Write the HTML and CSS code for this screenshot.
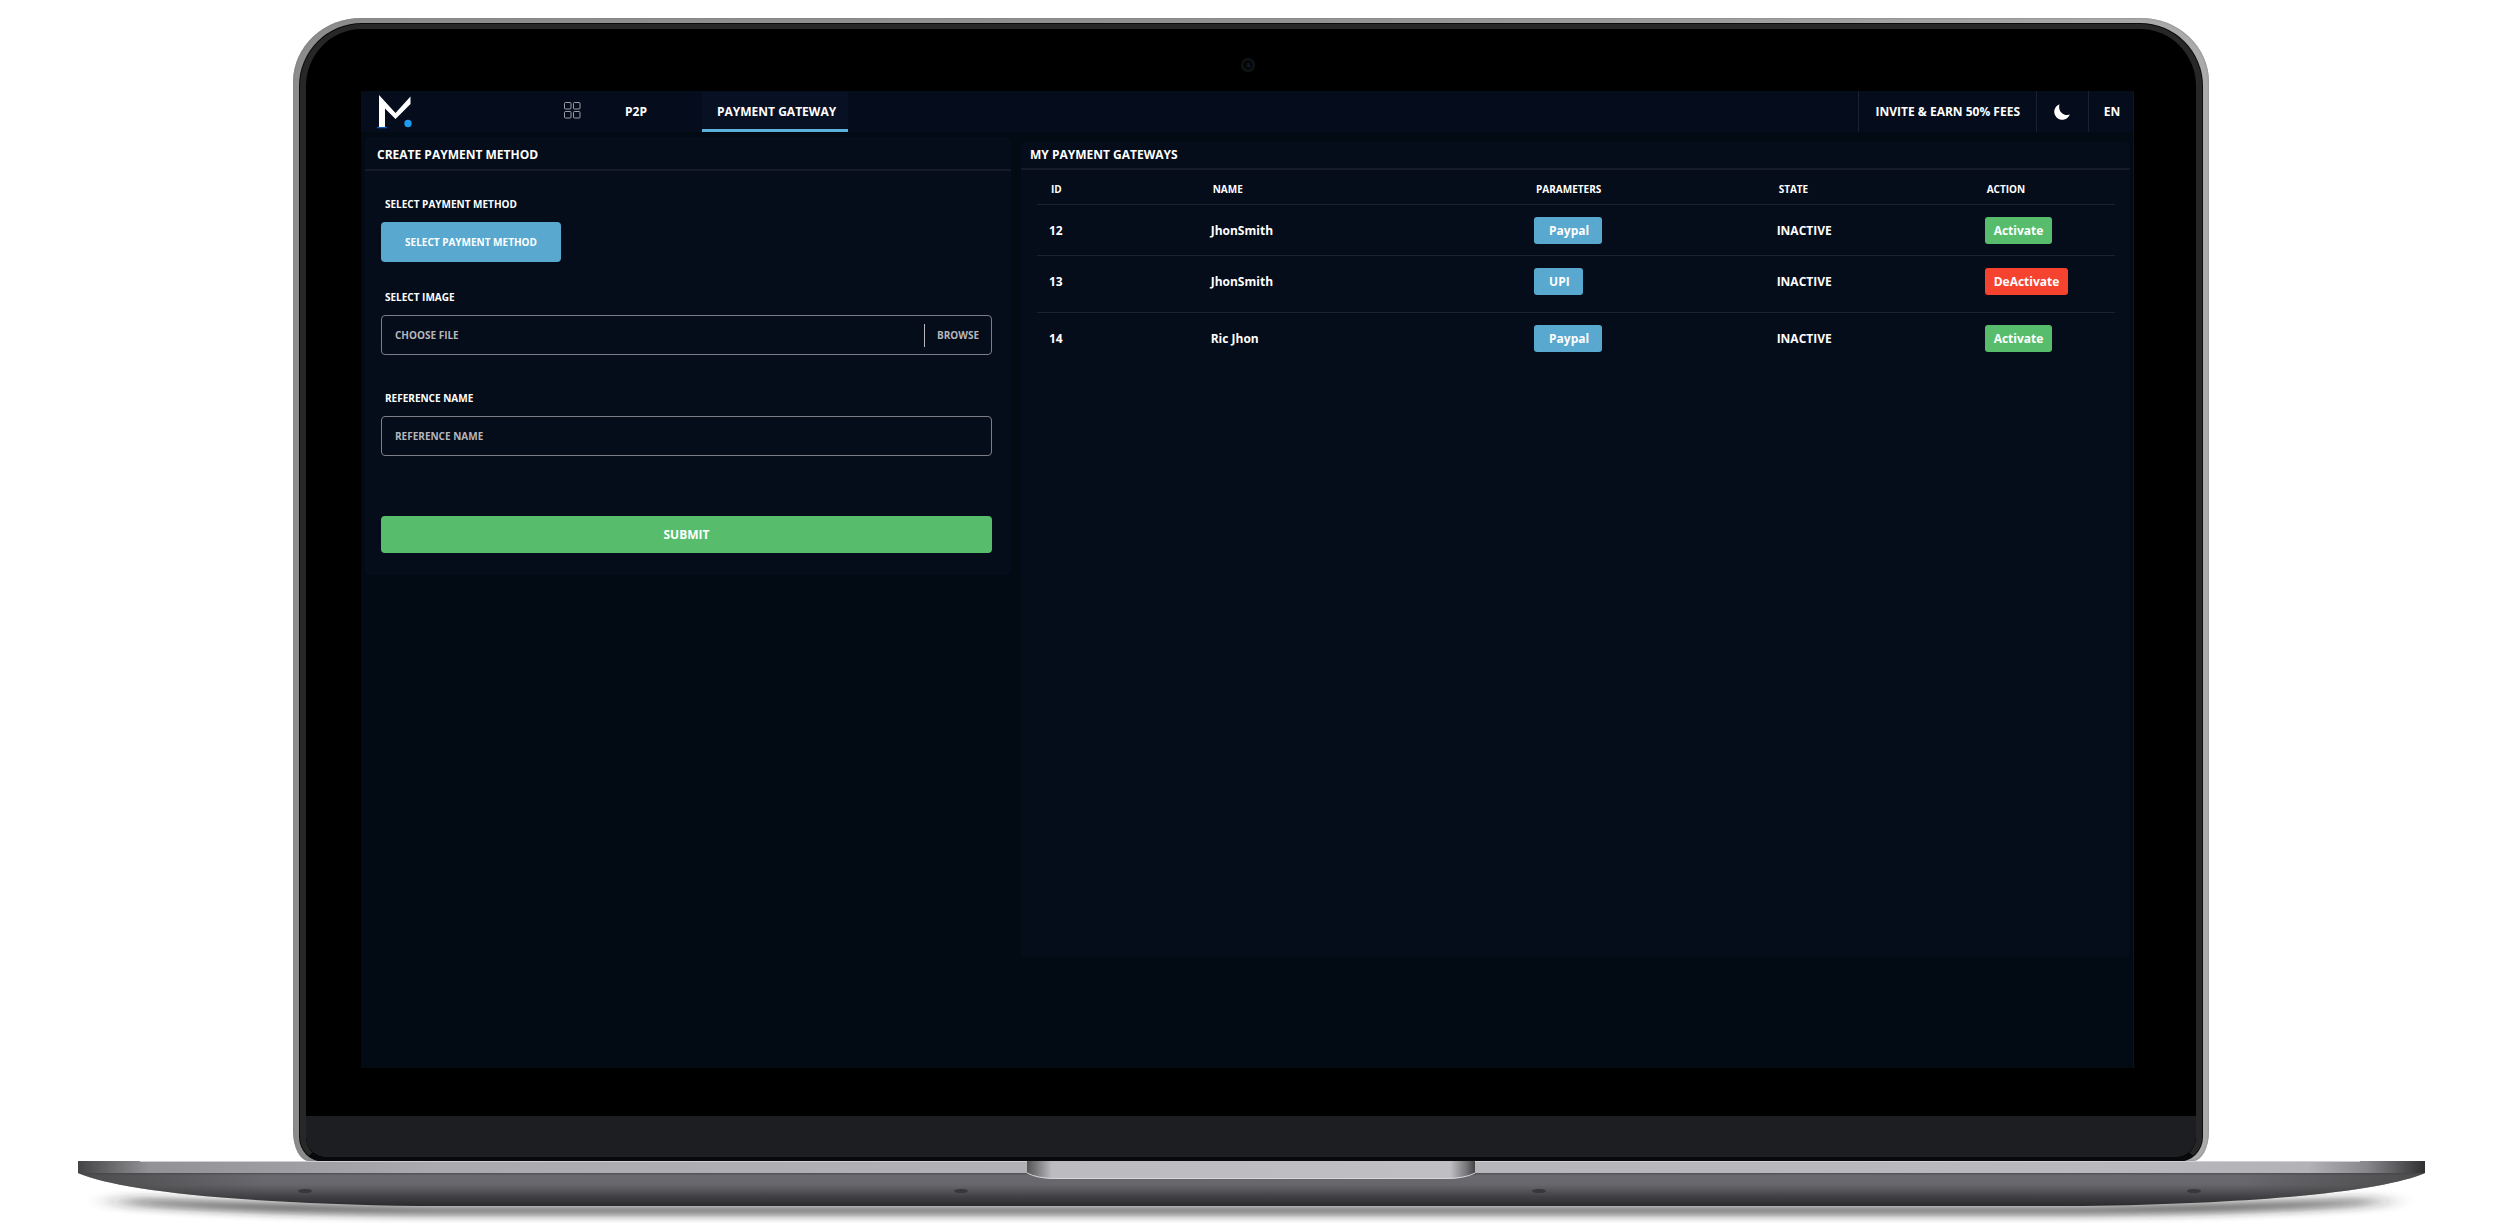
FILE: index.html
```html
<!DOCTYPE html>
<html lang="en">
<head>
<meta charset="utf-8">
<meta name="viewport" content="width=device-width, initial-scale=1">
<title>Payment Gateway</title>
<link rel="stylesheet" href="styles.css">
</head>
<body>
<div class="laptop">
  <div class="lid">
    <div class="bezel">
      <div class="camera-bar">
        <svg class="camera" viewBox="0 0 16 16" aria-hidden="true">
          <circle cx="8" cy="8" r="6" fill="#050708" stroke="#121516" stroke-width="2"/>
          <path d="M8 5l3 5H7z" fill="#101a2c"/>
        </svg>
      </div>
      <div class="screen">
        <header class="topbar">
          <a class="logo" href="#" aria-label="Home">
            <svg viewBox="0 0 36 34" aria-hidden="true">
              <path d="M0 32.500h10" stroke="#1257b5" stroke-width="1.500"/>
              <path d="M2 0L18.500 18 33.500 1.500V9L18.500 24 8 13.500V32H2z" fill="#fff"/>
              <circle cx="31" cy="28.500" r="3.700" fill="#1d9bf0"/>
            </svg>
          </a>
          <nav class="nav">
            <a class="nav-apps" href="#" aria-label="Apps">
              <svg viewBox="0 0 17 17" fill="none" stroke="#9b9ea4" aria-hidden="true">
                <rect x=".5" y=".5" width="6.500" height="6.500" rx="1"/>
                <rect x="9.500" y=".5" width="6.500" height="6.500" rx="1"/>
                <rect x=".5" y="9.500" width="6.500" height="6.500" rx="1"/>
                <rect x="9.500" y="9.500" width="6.500" height="6.500" rx="1"/>
              </svg>
            </a>
            <a class="nav-link" href="#">P2P</a>
            <a class="nav-link nav-link-active" href="#" aria-current="page">PAYMENT GATEWAY</a>
          </nav>
          <div class="tools">
            <a class="tool tool-invite" href="#">INVITE &amp; EARN 50% FEES</a>
            <button class="tool tool-theme" type="button" aria-label="Dark mode">
              <svg viewBox="0 0 16 16" aria-hidden="true"><path d="M5.500.3A8 8 0 1 0 15.800 10.500C10 12.500 3.500 7.500 5.500.3z" fill="#fff"/></svg>
            </button>
            <button class="tool tool-lang" type="button">EN</button>
          </div>
        </header>
        <main class="panels">
          <section class="panel panel-create">
            <h2 class="panel-title">CREATE PAYMENT METHOD</h2>
            <form class="form">
              <div class="field">
                <label class="label" for="method">SELECT PAYMENT METHOD</label>
                <button class="btn btn-method" id="method" type="button">SELECT PAYMENT METHOD</button>
              </div>
              <div class="field">
                <label class="label" for="image">SELECT IMAGE</label>
                <div class="control file">
                  <input class="file-name" id="image" type="text" placeholder="CHOOSE FILE" readonly>
                  <button class="file-browse" type="button">BROWSE</button>
                </div>
              </div>
              <div class="field">
                <label class="label" for="reference">REFERENCE NAME</label>
                <input class="control text" id="reference" type="text" placeholder="REFERENCE NAME">
              </div>
              <button class="btn btn-submit" type="submit">SUBMIT</button>
            </form>
          </section>
          <section class="panel panel-list">
            <h2 class="panel-title">MY PAYMENT GATEWAYS</h2>
            <table class="gateways">
              <colgroup><col class="col-id"><col class="col-name"><col class="col-parameters"><col class="col-state"><col class="col-action"></colgroup>
              <thead>
                <tr><th>ID</th><th>NAME</th><th>PARAMETERS</th><th>STATE</th><th>ACTION</th></tr>
              </thead>
              <tbody>
                <tr><td>12</td><td>JhonSmith</td><td><button class="tag" type="button">Paypal</button></td><td>INACTIVE</td><td><button class="action action-on" type="button">Activate</button></td></tr>
                <tr class="row-tall"><td>13</td><td>JhonSmith</td><td><button class="tag" type="button">UPI</button></td><td>INACTIVE</td><td><button class="action action-off" type="button">DeActivate</button></td></tr>
                <tr><td>14</td><td>Ric Jhon</td><td><button class="tag" type="button">Paypal</button></td><td>INACTIVE</td><td><button class="action action-on" type="button">Activate</button></td></tr>
              </tbody>
            </table>
          </section>
        </main>
      </div>
      <div class="chin"></div>
    </div>
  </div>
  <svg class="base" viewBox="0 0 2500 71" aria-hidden="true">
    <defs>
      <linearGradient id="edge" x1="78" x2="2425" y1="0" y2="0" gradientUnits="userSpaceOnUse">
        <stop offset="0" stop-color="#444447"/><stop offset=".012" stop-color="#636366"/><stop offset=".03" stop-color="#929195"/><stop offset=".15" stop-color="#aaa9ae"/>
        <stop offset=".5" stop-color="#b5b4b9"/><stop offset=".85" stop-color="#b9b8bd"/><stop offset=".95" stop-color="#b3b2b7"/><stop offset=".975" stop-color="#88878b"/><stop offset="1" stop-color="#303033"/>
      </linearGradient>
      <linearGradient id="under" x1="0" x2="0" y1="12" y2="46" gradientUnits="userSpaceOnUse">
        <stop offset="0" stop-color="#504f54"/><stop offset=".08" stop-color="#6b6a70"/><stop offset=".35" stop-color="#67666b"/><stop offset=".7" stop-color="#414044"/><stop offset="1" stop-color="#29292b"/>
      </linearGradient>
      <linearGradient id="ends" x1="78" x2="2425" y1="0" y2="0" gradientUnits="userSpaceOnUse">
        <stop offset="0" stop-color="#444" stop-opacity=".8"/><stop offset=".08" stop-color="#444" stop-opacity="0"/><stop offset=".92" stop-color="#444" stop-opacity="0"/><stop offset="1" stop-color="#444" stop-opacity=".8"/>
      </linearGradient>
      <linearGradient id="notch" x1="1027" x2="1475" y1="0" y2="0" gradientUnits="userSpaceOnUse">
        <stop offset="0" stop-color="#555"/><stop offset=".02" stop-color="#77777a"/><stop offset=".055" stop-color="#bcbbc0"/><stop offset=".945" stop-color="#bfbec3"/><stop offset=".98" stop-color="#77777a"/><stop offset="1" stop-color="#444"/>
      </linearGradient>
      <filter id="soft" x="-5%" y="-60%" width="110%" height="220%"><feGaussianBlur stdDeviation="18 5"/></filter>
    </defs>
    <path d="M120 38Q240 42 420 46H2080Q2260 42 2380 38V42Q2260 52 2080 53H420Q240 52 120 42z" fill="#222" opacity=".9" filter="url(#soft)"/>
    <path d="M78 12C115 28 220 42 420 45H2083C2283 42 2388 28 2425 12z" fill="url(#under)"/>
    <path d="M78 12C115 28 220 42 420 45H2083C2283 42 2388 28 2425 12z" fill="url(#ends)"/>
    <path d="M78 0H2425V12H78z" fill="url(#edge)"/>
    <path d="M140 .5H2360" stroke="#d0cfd3"/>
    <path d="M1027 0H1475V13Q1465 18 1445 18H1057Q1037 18 1027 13z" fill="url(#notch)"/>
    <path d="M1027 12Q1037 17.500 1057 17.500H1445Q1465 17.500 1475 12" fill="none" stroke="#d6d5d9"/>
    <g fill="#38373b"><ellipse cx="305" cy="30" rx="7" ry="2"/><ellipse cx="961" cy="30" rx="7" ry="2"/><ellipse cx="1539" cy="30" rx="7" ry="2"/><ellipse cx="2194" cy="30" rx="7" ry="2"/></g>
  </svg>
</div>
</body>
</html>
```
FILE: styles.css
```css
* { box-sizing: border-box; }

body {
  margin: 0;
  background: #fff;
  color: #fff;
  font: 700 12px/16px "Open Sans", "Noto Sans", sans-serif;
}

a { color: inherit; text-decoration: none; }
button, input { font: inherit; color: inherit; }
button { cursor: pointer; border: 0; padding: 0; background: none; }
svg { display: block; }

/* Laptop shell */
.laptop {
  display: grid;
  grid-template-columns: 293fr 1916fr 291fr;
  padding-top: 18px;
}
.lid {
  grid-column: 2;
  padding: 6px 7px 0;
  border-radius: 68px 68px 16px 16px / 64px 64px 30px 30px;
  background: linear-gradient(90deg, #8c8c8c, #929292 50%, #ababab);
  box-shadow: inset 0 0 2px #777;
}
.bezel {
  border: 4px solid #272727;
  border-width: 5px 6px 4px;
  border-bottom-color: #08090a;
  border-radius: 62px 62px 24px 24px;
  overflow: hidden;
  background: #000;
  box-shadow: 0 0 0 1px #0b0b0b;
}
.camera-bar {
  display: flex;
  justify-content: center;
  height: 62px;
  padding: 28px 6px 0 0;
}
.camera { width: 16px; height: 16px; }
.chin {
  height: 41px;
  margin-top: 48px;
  border-radius: 0 0 20px 20px;
  background: #1d1e22;
}
.base { grid-column: 1 / -1; width: 100%; height: auto; }

/* Application */
.screen {
  margin: 0 62px 0 55px;
  min-height: 977px;
  background: #020a14;
  border-right: 1px solid #10151d;
}
.topbar {
  display: flex;
  height: 41px;
  background: #050d1c;
}
.logo { width: 203px; padding: 4px 0 0 16px; }
.logo svg { width: 36px; height: 34px; }
.nav { display: flex; flex: 1; line-height: 42px; }
.nav-apps { padding-top: 11px; width: 61px; }
.nav-apps svg { width: 17px; height: 17px; }
.nav-link { width: 77px; height: 41px; }
.nav-link-active {
  width: auto;
  padding: 0 12px 0 15px;
  border-bottom: 3px solid #5cb0dc;
  background: #081124;
}
.tools { display: flex; }
.tool { border-left: 1px solid #1b212e; line-height: 42px; }
.tool-invite { padding: 0 16px 0 17px; }
.tool-theme { width: 52px; padding-left: 17px; }
.tool-theme svg { width: 16px; height: 16px; }
.tool-lang { width: 45px; padding-left: 2px; line-height: 40px; text-align: center; }

.panels {
  display: grid;
  grid-template-columns: 646fr 1109fr;
  align-items: start;
  gap: 10px;
  padding: 5px 3px 0 4px;
}
.panel { border-radius: 4px; background: #050c1a; }
.panel-list { margin-top: 5px; min-height: 815px; }
.panel-title {
  margin: 0;
  padding: 10px 12px 6px;
  border-bottom: 2px solid #151b27;
  font-size: 12px;
  line-height: 16px;
}
.panel-list .panel-title { padding: 5px 9px; }

/* Form */
.form { display: grid; padding: 25px 19px 22px 16px; font-size: 10px; }
.label { display: block; padding: 0 4px; margin-bottom: 10px; }
.btn { border-radius: 4px; color: #fff; }
.btn-method { width: 180px; height: 40px; margin-bottom: 27px; background: #59a8cf; }
.control {
  display: flex;
  width: 100%;
  height: 40px;
  border: 1px solid #7b7e85;
  border-radius: 4px;
  background: none;
}
.file { align-items: center; margin-bottom: 35px; }
.file-name { flex: 1; border: 0; padding: 0 13px; background: none; outline: 0; }
.file-browse { width: 67px; height: 23px; border-left: 1px solid #b5b7ba; color: #b5b7ba; }
.text { padding: 0 13px; margin-bottom: 60px; }
::placeholder { color: #b5b7ba; opacity: 1; }
.btn-submit { height: 37px; background: #57bd6c; font-size: 12px; }

/* Table */
.gateways {
  width: calc(100% - 31px);
  margin: 0 15px 0 16px;
  border-collapse: collapse;
  table-layout: fixed;
}
.col-id { width: 15%; }
.col-name { width: 30%; }
.col-parameters { width: 22.5%; }
.col-state { width: 19.3%; }
.col-action { width: 13.2%; }
th { padding: 11px 14px 7px; font-size: 10px; text-align: left; border-bottom: 1px solid #1b212d; }
td { padding: 12px 12px 11px; vertical-align: top; line-height: 27px; border-bottom: 1px solid #1b212d; }
tbody tr:last-child td { border-bottom: 0; }
.row-tall td { padding-bottom: 17px; }
.tag, .action { display: block; height: 27px; border-radius: 3px; color: #fff; }
.tag { padding: 0 13px 0 15px; background: #59a8cf; }
.action { padding: 0 9px; }
.action-on { background: #57bd6c; }
.action-off { background: #f6432f; }
```
